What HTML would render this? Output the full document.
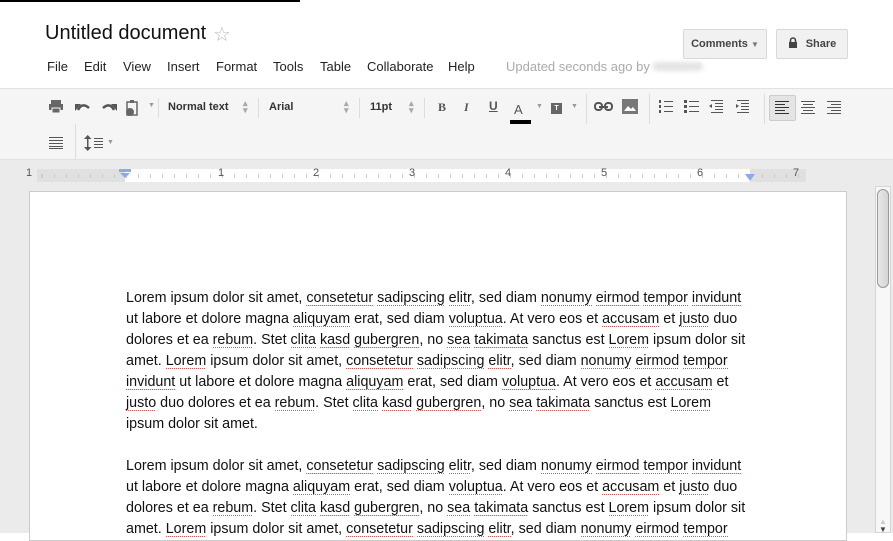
<!DOCTYPE html>
<html><head><meta charset="utf-8"><style>
*{margin:0;padding:0;box-sizing:border-box}
body{width:893px;height:533px;overflow:hidden;background:#fff;font-family:"Liberation Sans",Arial,sans-serif;position:relative}
.a{position:absolute}
.menu span{position:absolute;top:0;font-size:13px;color:#222}
.btn{position:absolute;border:1px solid #d8d8d8;background:#f1f1f1;border-radius:2px;font-size:11px;font-weight:bold;color:#444;text-align:center}
.tb{position:absolute;font-size:11px;font-weight:bold;color:#333}
.sep{position:absolute;width:1px;background:#ddd}
.doc{position:absolute;left:126px;font-size:14.3px;line-height:21px;color:#111;white-space:pre}
.doc u{text-decoration:none;background-image:repeating-linear-gradient(90deg,#d55 0,#d55 1px,transparent 1px,transparent 2px);background-size:100% 1px;background-repeat:no-repeat;background-position:0 100%}
.ic{position:absolute}
</style></head><body>
<div class="a" style="left:0;top:0;width:300px;height:2px;background:#000"></div>
<div class="a" style="left:45px;top:22px;font-size:20px;color:#111">Untitled document</div>
<div class="a" style="left:213px;top:22px;font-size:20px;color:#bbb">☆</div>
<div class="menu a" style="left:0;top:59px;width:893px;height:16px">
<span style="left:47px">File</span><span style="left:84px">Edit</span><span style="left:123px">View</span><span style="left:167px">Insert</span><span style="left:216px">Format</span><span style="left:273px">Tools</span><span style="left:320px">Table</span><span style="left:367px">Collaborate</span><span style="left:448px">Help</span>
<span style="left:506px;color:#aaa">Updated seconds ago by</span>
<span style="left:653px;top:3px;width:50px;height:9px;background:#e4e4e4;border-radius:4px;filter:blur(2px)"></span>
</div>
<div class="btn" style="left:683px;top:29px;width:84px;height:30px;line-height:28px">Comments <span style="font-size:8px;color:#777">▼</span></div>
<div class="btn" style="left:776px;top:29px;width:72px;height:30px;line-height:28px"><svg width="10" height="11" style="vertical-align:-1px;margin-right:8px"><path d="M2.5 5 V3.5 A2.5 2.5 0 0 1 7.5 3.5 V5" stroke="#444" stroke-width="1.6" fill="none"/><rect x="1" y="5" width="8" height="6" fill="#444"/></svg>Share</div>
<!-- toolbar -->
<div class="a" style="left:0;top:88px;width:893px;height:72px;background:#f5f5f5;border-top:1px solid #e2e2e2;border-bottom:1px solid #e2e2e2"></div>
<svg class="ic" style="left:48px;top:99px" width="16" height="16"><rect x="3" y="1" width="10" height="4" fill="#666"/><rect x="1" y="5" width="14" height="6" fill="#666"/><rect x="4" y="9" width="8" height="5" fill="#666" stroke="#f5f5f5"/></svg>
<svg class="ic" style="left:74px;top:100px" width="18" height="14"><path d="M4 10 Q8 2 15 8" stroke="#555" stroke-width="2.5" fill="none"/><path d="M1 4 L7 4 L1 11Z" fill="#555"/></svg>
<svg class="ic" style="left:100px;top:100px" width="18" height="14"><path d="M14 10 Q10 2 3 8" stroke="#555" stroke-width="2.5" fill="none"/><path d="M17 4 L11 4 L17 11Z" fill="#555"/></svg>
<svg class="ic" style="left:126px;top:98px" width="14" height="19"><rect x="1" y="4" width="10" height="13" fill="none" stroke="#666" stroke-width="1.5"/><rect x="4" y="2" width="4" height="3" fill="#666"/><circle cx="4" cy="14" r="4" fill="#666"/></svg>
<div class="tb" style="left:148px;top:102px;color:#999;font-size:7px">▼</div>
<div class="sep" style="left:158px;top:98px;height:20px"></div>
<div class="tb" style="left:168px;top:101px">Normal text</div>
<div class="tb" style="left:243px;top:100px;color:#aaa;font-size:9px;line-height:7px">▴<br>▾</div>
<div class="sep" style="left:258px;top:98px;height:20px"></div>
<div class="tb" style="left:269px;top:101px">Arial</div>
<div class="tb" style="left:344px;top:100px;color:#aaa;font-size:9px;line-height:7px">▴<br>▾</div>
<div class="sep" style="left:359px;top:98px;height:20px"></div>
<div class="tb" style="left:370px;top:101px">11pt</div>
<div class="tb" style="left:409px;top:100px;color:#aaa;font-size:9px;line-height:7px">▴<br>▾</div>
<div class="sep" style="left:424px;top:98px;height:20px"></div>
<div class="tb" style="left:438px;top:100px;font-size:12px;color:#555;font-family:'Liberation Serif',serif">B</div>
<div class="tb" style="left:464px;top:100px;font-size:12px;color:#555;font-style:italic;font-family:'Liberation Serif',serif">I</div>
<div class="tb" style="left:489px;top:99px;font-size:12px;color:#555;text-decoration:underline">U</div>
<div class="tb" style="left:514px;top:102px;font-size:13px;color:#555;font-weight:normal">A</div>
<div class="a" style="left:510px;top:120px;width:21px;height:4px;background:#000"></div>
<div class="tb" style="left:536px;top:103px;color:#999;font-size:7px">▼</div>
<div class="a" style="left:551px;top:103px;width:11px;height:11px;background:#666;color:#fff;font-size:7px;text-align:center;line-height:11px;font-weight:bold">T</div>
<div class="tb" style="left:571px;top:103px;color:#999;font-size:7px">▼</div>
<div class="sep" style="left:586px;top:94px;height:30px"></div>
<svg class="ic" style="left:594px;top:102px" width="20" height="10"><rect x="1" y="1" width="7" height="7" rx="3" fill="none" stroke="#555" stroke-width="2"/><rect x="11" y="1" width="7" height="7" rx="3" fill="none" stroke="#555" stroke-width="2"/><rect x="5" y="4" width="9" height="2" fill="#555"/></svg>
<svg class="ic" style="left:622px;top:99px" width="16" height="16"><rect width="16" height="15" fill="#777"/><path d="M2 12 L6 7 L9 10 L11 8 L14 12Z" fill="#fff"/></svg>
<div class="sep" style="left:649px;top:94px;height:30px"></div>
<svg class="ic" style="left:659px;top:100px" width="90" height="14" fill="#555">
<rect x="0" y="0" width="2" height="3"/><rect x="0" y="5" width="2" height="3"/><rect x="0" y="10" width="2" height="3"/><rect x="5" y="1" width="9" height="1"/><rect x="5" y="6" width="9" height="1"/><rect x="5" y="11" width="9" height="1"/>
<rect x="25" y="0" width="3" height="3"/><rect x="25" y="5" width="3" height="3"/><rect x="25" y="10" width="3" height="3"/><rect x="30" y="1" width="10" height="1"/><rect x="30" y="6" width="10" height="1"/><rect x="30" y="11" width="10" height="1"/>
<rect x="52" y="0" width="12" height="1"/><rect x="56" y="3" width="8" height="1"/><rect x="56" y="6" width="8" height="1"/><rect x="56" y="9" width="8" height="1"/><rect x="52" y="12" width="12" height="1"/><path d="M53 4 L50 6 L53 8Z"/>
<rect x="78" y="0" width="12" height="1"/><rect x="82" y="3" width="8" height="1"/><rect x="82" y="6" width="8" height="1"/><rect x="82" y="9" width="8" height="1"/><rect x="78" y="12" width="12" height="1"/><path d="M77 4 L80 6 L77 8Z"/>
</svg>
<div class="sep" style="left:764px;top:94px;height:30px"></div>
<div class="a" style="left:769px;top:95px;width:27px;height:26px;background:#e4e4e4;border:1px solid #ccc;border-radius:2px"></div>
<svg class="ic" style="left:775px;top:101px" width="70" height="13" fill="#333">
<rect x="0" y="0" width="14" height="1"/><rect x="0" y="3" width="10" height="1"/><rect x="0" y="6" width="14" height="1"/><rect x="0" y="9" width="10" height="1"/><rect x="0" y="12" width="14" height="1"/>
<g fill="#555"><rect x="26" y="0" width="14" height="1"/><rect x="28" y="3" width="10" height="1"/><rect x="26" y="6" width="14" height="1"/><rect x="28" y="9" width="10" height="1"/><rect x="26" y="12" width="14" height="1"/>
<rect x="52" y="0" width="14" height="1"/><rect x="56" y="3" width="10" height="1"/><rect x="52" y="6" width="14" height="1"/><rect x="56" y="9" width="10" height="1"/><rect x="52" y="12" width="14" height="1"/></g>
</svg>
<svg class="ic" style="left:49px;top:137px" width="14" height="12" fill="#555"><rect y="0" width="14" height="1"/><rect y="3" width="14" height="1"/><rect y="6" width="14" height="1"/><rect y="9" width="14" height="1"/><rect y="11" width="14" height="1"/></svg>
<div class="sep" style="left:75px;top:124px;height:36px"></div>
<svg class="ic" style="left:84px;top:135px" width="22" height="16" fill="#555"><rect x="3" y="2" width="1.5" height="12"/><path d="M0 4 L3.7 0 L7.5 4Z M0 12 L3.7 16 L7.5 12Z"/><rect x="10" y="3" width="9" height="1"/><rect x="10" y="6" width="9" height="1"/><rect x="10" y="9" width="9" height="1"/><rect x="10" y="12" width="9" height="1"/></svg>
<div class="tb" style="left:107px;top:139px;color:#999;font-size:7px">▼</div>
<!-- ruler / body bg -->
<div class="a" style="left:0;top:160px;width:893px;height:373px;background:#ebebeb"></div>
<div class="a" style="left:37px;top:169px;width:88px;height:13px;background:#e0e0e0"></div>
<div class="a" style="left:125px;top:169px;width:625px;height:13px;background:#fff"></div>
<div class="a" style="left:750px;top:169px;width:56px;height:13px;background:#e0e0e0"></div>
<div class="a" style="left:37px;top:174px;width:769px;height:4px;background-image:repeating-linear-gradient(90deg,#ccc 0,#ccc 1px,transparent 1px,transparent 12px);background-position:5px 0"></div>
<div class="a" style="top:167px;left:0;width:893px;font-size:11px;color:#555">
<span class="a" style="left:26px">1</span><span class="a" style="left:218px">1</span><span class="a" style="left:313px">2</span><span class="a" style="left:409px">3</span><span class="a" style="left:505px">4</span><span class="a" style="left:601px">5</span><span class="a" style="left:697px">6</span><span class="a" style="left:793px">7</span></div>
<svg class="ic" style="left:119px;top:169px" width="12" height="9"><rect x="0" y="0" width="12" height="3" fill="#8aaaea"/><path d="M1 4 L11 4 L6 9Z" fill="#8aaaea"/></svg>
<svg class="ic" style="left:744px;top:174px" width="12" height="8"><path d="M1 0 L11 0 L6 7Z" fill="#8aaaea"/></svg>
<!-- page -->
<div class="a" style="left:29px;top:191px;width:818px;height:350px;background:#fff;border:1px solid #ccc"></div>
<div class="doc" style="top:288px">Lorem ipsum dolor sit amet, <u>consetetur</u> <u>sadipscing</u> <u>elitr</u>, sed diam <u>nonumy</u> <u>eirmod</u> <u>tempor</u> <u>invidunt</u>
ut labore et dolore magna <u>aliquyam</u> erat, sed diam <u>voluptua</u>. At vero eos et <u>accusam</u> et <u>justo</u> duo
dolores et ea <u>rebum</u>. Stet <u>clita</u> <u>kasd</u> <u>gubergren</u>, no <u>sea</u> <u>takimata</u> sanctus est <u>Lorem</u> ipsum dolor sit
amet. <u>Lorem</u> ipsum dolor sit amet, <u>consetetur</u> <u>sadipscing</u> <u>elitr</u>, sed diam <u>nonumy</u> <u>eirmod</u> <u>tempor</u>
<u>invidunt</u> ut labore et dolore magna <u>aliquyam</u> erat, sed diam <u>voluptua</u>. At vero eos et <u>accusam</u> et
<u>justo</u> duo dolores et ea <u>rebum</u>. Stet <u>clita</u> <u>kasd</u> <u>gubergren</u>, no <u>sea</u> <u>takimata</u> sanctus est <u>Lorem</u>
ipsum dolor sit amet.

Lorem ipsum dolor sit amet, <u>consetetur</u> <u>sadipscing</u> <u>elitr</u>, sed diam <u>nonumy</u> <u>eirmod</u> <u>tempor</u> <u>invidunt</u>
ut labore et dolore magna <u>aliquyam</u> erat, sed diam <u>voluptua</u>. At vero eos et <u>accusam</u> et <u>justo</u> duo
dolores et ea <u>rebum</u>. Stet <u>clita</u> <u>kasd</u> <u>gubergren</u>, no <u>sea</u> <u>takimata</u> sanctus est <u>Lorem</u> ipsum dolor sit
amet. <u>Lorem</u> ipsum dolor sit amet, <u>consetetur</u> <u>sadipscing</u> <u>elitr</u>, sed diam <u>nonumy</u> <u>eirmod</u> <u>tempor</u></div>
<!-- scrollbar -->
<div class="a" style="left:875px;top:186px;width:16px;height:347px;background:#f7f7f7;border:1px solid #d6d6d6"></div>
<div class="a" style="left:877px;top:189px;width:12px;height:99px;background:linear-gradient(90deg,#e8e8e8,#d4d4d4);border:1px solid #999;border-radius:6px"></div>
<div class="a" style="left:879px;top:517px;font-size:8px;color:#ccc">▲</div>
<div class="a" style="left:879px;top:525px;font-size:8px;color:#444">▼</div>
</body></html>
